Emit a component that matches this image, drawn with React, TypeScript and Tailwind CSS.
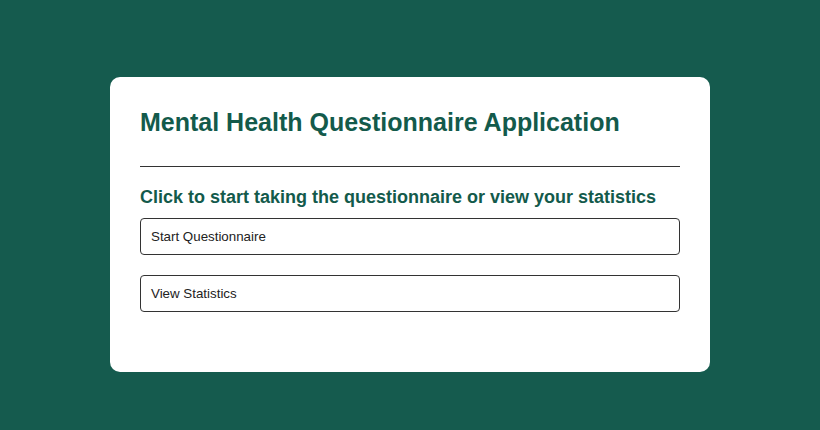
export default function App() {
  return (
    <div className="flex h-[430px] w-full justify-center bg-[#155b4e] pt-[77px] font-['Liberation_Sans',Arial,sans-serif]">
      <div className="flex h-[295px] w-[600px] flex-col rounded-[10px] bg-white px-[30px] pt-[30px]">
        <h1 className="text-[25px] leading-[30px] font-bold text-[#135a4b]">
          Mental Health Questionnaire Application
        </h1>
        <hr className="mt-[29px] border-t border-[#333]" />
        <h2 className="mt-[19px] text-[18px] leading-[22px] font-bold text-[#135a4b]">
          Click to start taking the questionnaire or view your statistics
        </h2>
        <div className="mt-[10px] flex flex-col gap-[20px]">
          <button className="h-[37px] rounded-[4px] border border-[#333] bg-white px-[10px] text-left text-[13.33px] text-[#222]">
            Start Questionnaire
          </button>
          <button className="h-[37px] rounded-[4px] border border-[#333] bg-white px-[10px] text-left text-[13.33px] text-[#222]">
            View Statistics
          </button>
        </div>
      </div>
    </div>
  );
}
